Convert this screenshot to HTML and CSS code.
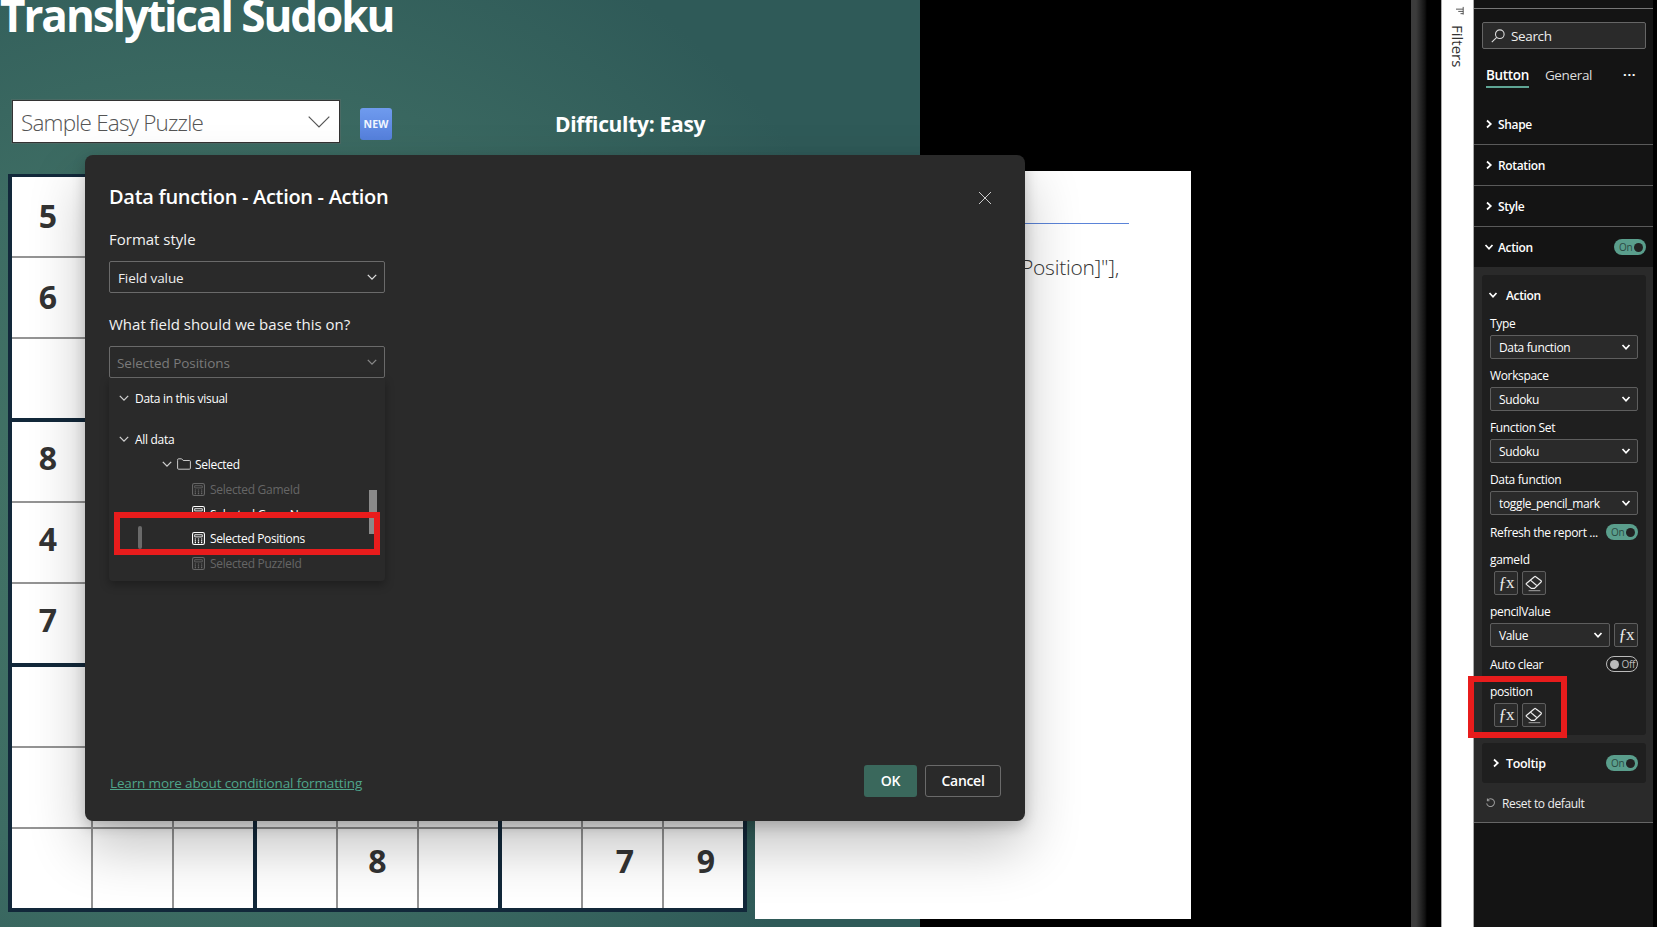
FILE: index.html
```html
<!DOCTYPE html>
<html lang="en">
<head>
<meta charset="utf-8">
<title>Translytical Sudoku</title>
<link rel="stylesheet" href="styles.css">
</head>
<body>
<svg class="defs" width="0" height="0" aria-hidden="true">
  <defs>
    <symbol id="chev" viewBox="0 0 10 10"><path d="M1.5 3.2 5 6.8 8.5 3.2" fill="none" stroke="currentColor" stroke-width="1.1"/></symbol>
    <symbol id="chev-bold" viewBox="0 0 10 10"><path d="M1.5 3 5 6.8 8.5 3" fill="none" stroke="currentColor" stroke-width="1.7"/></symbol>
    <symbol id="chev-right" viewBox="0 0 10 10"><path d="M3 1.5 6.8 5 3 8.5" fill="none" stroke="currentColor" stroke-width="1.7"/></symbol>
    <symbol id="calc" viewBox="0 0 12 12"><rect x=".5" y=".5" width="11" height="11" rx="1.6" fill="none" stroke="currentColor"/><path d="M2.5 2.5h7v2h-7z" fill="none" stroke="currentColor" stroke-width=".8"/><path d="M2.5 6.5h1.2M5.4 6.5h1.2M8.3 6.5h1.2M2.5 8.2h1.2M5.4 8.2h1.2M8.3 8.2h1.2M2.5 9.8h1.2M5.4 9.8h1.2M8.3 9.8h1.2" stroke="currentColor"/></symbol>
    <symbol id="eraser" viewBox="0 0 20 20"><path d="M1.500 10.500 10.500 3a1 1 0 0 1 1.400 0l6 4.500a1 1 0 0 1 0 1.400L10.500 16H7L1.500 11.600a.8.8 0 0 1 0-1.100Z" fill="none" stroke="currentColor" stroke-width="1.300"/><path d="M6 6.800 13 12.800" stroke="currentColor" stroke-width="1.300"/><path d="M4 18.500h13" stroke="#9a9a9a" stroke-width="1.200"/></symbol>
  </defs>
</svg>

<div class="app">
  <main class="report">
    <section class="canvas">
      <h1 class="title">Translytical Sudoku</h1>
      <div class="toolbar">
        <div class="slicer">
          <span>Sample Easy Puzzle</span>
          <svg class="slicer-chev" viewBox="0 0 22 12"><path d="M.7.7 11 11 21.300.7" fill="none" stroke="#555" stroke-width="1.200"/></svg>
        </div>
        <div class="new-btn">NEW</div>
        <div class="difficulty">Difficulty: Easy</div>
      </div>
      <div class="board">
        <div class="box">
          <div class="cell first">5</div><div class="cell"></div><div class="cell"></div>
          <div class="cell first">6</div><div class="cell"></div><div class="cell"></div>
          <div class="cell first"></div><div class="cell"></div><div class="cell"></div>
        </div>
        <div class="box">
          <div class="cell"></div><div class="cell"></div><div class="cell"></div>
          <div class="cell"></div><div class="cell"></div><div class="cell"></div>
          <div class="cell"></div><div class="cell"></div><div class="cell"></div>
        </div>
        <div class="box">
          <div class="cell"></div><div class="cell"></div><div class="cell"></div>
          <div class="cell"></div><div class="cell"></div><div class="cell"></div>
          <div class="cell"></div><div class="cell"></div><div class="cell"></div>
        </div>
        <div class="box">
          <div class="cell first">8</div><div class="cell"></div><div class="cell"></div>
          <div class="cell first">4</div><div class="cell"></div><div class="cell"></div>
          <div class="cell first">7</div><div class="cell"></div><div class="cell"></div>
        </div>
        <div class="box">
          <div class="cell"></div><div class="cell"></div><div class="cell"></div>
          <div class="cell"></div><div class="cell"></div><div class="cell"></div>
          <div class="cell"></div><div class="cell"></div><div class="cell"></div>
        </div>
        <div class="box">
          <div class="cell"></div><div class="cell"></div><div class="cell"></div>
          <div class="cell"></div><div class="cell"></div><div class="cell"></div>
          <div class="cell"></div><div class="cell"></div><div class="cell"></div>
        </div>
        <div class="box">
          <div class="cell first"></div><div class="cell"></div><div class="cell"></div>
          <div class="cell first"></div><div class="cell"></div><div class="cell"></div>
          <div class="cell first"></div><div class="cell"></div><div class="cell"></div>
        </div>
        <div class="box">
          <div class="cell"></div><div class="cell"></div><div class="cell"></div>
          <div class="cell"></div><div class="cell"></div><div class="cell"></div>
          <div class="cell"></div><div class="cell">8</div><div class="cell"></div>
        </div>
        <div class="box">
          <div class="cell"></div><div class="cell"></div><div class="cell"></div>
          <div class="cell"></div><div class="cell"></div><div class="cell"></div>
          <div class="cell"></div><div class="cell">7</div><div class="cell">9</div>
        </div>
      </div>
    </section>
    <aside class="doc">
      <div class="doc-rule"></div>
      <p class="doc-text">Position]"],</p>
    </aside>
  </main>

  <div class="splitter"></div>

  <aside class="filters">
    <svg class="filters-icon" viewBox="0 0 10 10"><path d="M0 3.500h8M2.500 6h5.500M5 8.500h3M8 1v8.500" fill="none" stroke="#444" stroke-width="1"/></svg>
    <span class="filters-label">Filters</span>
  </aside>

  <aside class="format">
    <div class="format-top"></div>
    <div class="search">
      <svg class="search-icon" viewBox="0 0 14 14"><circle cx="8.800" cy="5.200" r="4.300" fill="none" stroke="currentColor" stroke-width="1.100"/><path d="M5.700 8.300.8 13.200" stroke="currentColor" stroke-width="1.100"/></svg>
      <span>Search</span>
    </div>
    <div class="tabs">
      <span class="tab tab-active">Button</span>
      <span class="tab">General</span>
      <span class="tab-more">···</span>
    </div>
    <div class="section"><svg class="ic-sm"><use href="#chev-right"/></svg><span>Shape</span></div>
    <div class="section"><svg class="ic-sm"><use href="#chev-right"/></svg><span>Rotation</span></div>
    <div class="section"><svg class="ic-sm"><use href="#chev-right"/></svg><span>Style</span></div>
    <div class="section section-open">
      <svg class="ic-sm"><use href="#chev-bold"/></svg><span>Action</span>
      <span class="toggle toggle-end"><span class="toggle-text">On</span><span class="knob"></span></span>
    </div>
    <div class="section-body">
      <div class="card">
        <div class="card-head"><svg class="ic-sm"><use href="#chev-bold"/></svg><span>Action</span></div>
        <div class="field"><label>Type</label><div class="pick"><span>Data function</span><svg class="ic-pick"><use href="#chev-bold"/></svg></div></div>
        <div class="field"><label>Workspace</label><div class="pick"><span>Sudoku</span><svg class="ic-pick"><use href="#chev-bold"/></svg></div></div>
        <div class="field"><label>Function Set</label><div class="pick"><span>Sudoku</span><svg class="ic-pick"><use href="#chev-bold"/></svg></div></div>
        <div class="field"><label>Data function</label><div class="pick"><span>toggle_pencil_mark</span><svg class="ic-pick"><use href="#chev-bold"/></svg></div></div>
        <div class="switch-row"><span>Refresh the report ...</span><span class="toggle"><span class="toggle-text">On</span><span class="knob"></span></span></div>
        <div class="field"><label>gameId</label>
          <div class="btn-pair"><span class="sq fx">ƒx</span><span class="sq"><svg class="ic-eraser"><use href="#eraser"/></svg></span></div>
        </div>
        <div class="field"><label>pencilValue</label>
          <div class="pick-row">
            <div class="pick pick-grow"><span>Value</span><svg class="ic-pick"><use href="#chev-bold"/></svg></div>
            <span class="sq fx">ƒx</span>
          </div>
        </div>
        <div class="switch-row"><span>Auto clear</span><span class="toggle toggle-off"><span class="knob"></span><span class="toggle-text">Off</span></span></div>
        <div class="field field-last"><label>position</label>
          <div class="btn-pair"><span class="sq fx">ƒx</span><span class="sq"><svg class="ic-eraser"><use href="#eraser"/></svg></span></div>
        </div>
      </div>
      <div class="card card-row">
        <svg class="ic-sm"><use href="#chev-right"/></svg><span>Tooltip</span>
        <span class="toggle toggle-end"><span class="toggle-text">On</span><span class="knob"></span></span>
      </div>
      <div class="reset">
        <svg class="ic-reset" viewBox="0 0 12 12"><path d="M2.800 2.200a4.300 4.300 0 1 1-1 3.600M2.600.6v2.300h2.300" fill="none" stroke="#999" stroke-width="1.100"/></svg>
        <span>Reset to default</span>
      </div>
    </div>
  </aside>

  <div class="dialog">
    <div class="dialog-head">
      <h2>Data function - Action - Action</h2>
      <svg class="dialog-close" viewBox="0 0 14 14"><path d="M1 1l12 12M13 1 1 13" stroke="#ccc" stroke-width="1"/></svg>
    </div>
    <div class="dlg-label dlg-label-first">Format style</div>
    <div class="combo"><span>Field value</span><svg class="ic-combo"><use href="#chev"/></svg></div>
    <div class="dlg-label">What field should we base this on?</div>
    <div class="combo combo-dim"><span>Selected Positions</span><svg class="ic-combo"><use href="#chev"/></svg></div>
    <div class="tree">
      <div class="tree-row lvl0 row-head"><svg class="ic-tree"><use href="#chev"/></svg><span>Data in this visual</span></div>
      <div class="tree-row lvl0 row-alldata"><svg class="ic-tree"><use href="#chev"/></svg><span>All data</span></div>
      <div class="tree-row lvl1">
        <svg class="ic-tree"><use href="#chev"/></svg>
        <svg class="ic-folder" viewBox="0 0 14 12"><path d="M.6 2.500V1.800a1 1 0 0 1 1-1h3L6.200 2.500h6.200a1 1 0 0 1 1 1v6.700a1 1 0 0 1-1 1H1.600a1 1 0 0 1-1-1Z" fill="none" stroke="currentColor" stroke-width=".9"/></svg>
        <span>Selected</span>
      </div>
      <div class="tree-row lvl2 row-dim row-gameid"><svg class="ic-calc"><use href="#calc"/></svg><span>Selected GameId</span></div>
      <div class="tree-row lvl2 row-cut"><svg class="ic-calc"><use href="#calc"/></svg><span>Selected GameName</span></div>
      <div class="tree-row lvl2 row-current"><svg class="ic-calc"><use href="#calc"/></svg><span>Selected Positions</span></div>
      <div class="tree-row lvl2 row-dim row-puzzle"><svg class="ic-calc"><use href="#calc"/></svg><span>Selected PuzzleId</span></div>
      <div class="tree-scroll"></div>
    </div>
    <div class="dialog-foot">
      <a class="learn" href="#">Learn more about conditional formatting</a>
      <div class="dialog-actions">
        <span class="btn btn-ok">OK</span>
        <span class="btn btn-cancel">Cancel</span>
      </div>
    </div>
  </div>

  <div class="mark mark-tree"></div>
  <div class="mark mark-position"></div>
</div>
</body>
</html>
```

FILE: styles.css
```css
* { box-sizing: border-box; }
html, body { margin: 0; padding: 0; background: #000; }
body { font-family: "Open Sans", "Noto Sans", sans-serif; }
.defs { position: absolute; }

.app {
  position: relative;
  display: flex;
  width: 1657px;
  height: 927px;
  overflow: hidden;
  background: #000;
}

/* Report canvas */
.report { position: relative; width: 1411px; height: 927px; flex: none; }
.canvas {
  width: 920px;
  height: 927px;
  background: radial-gradient(ellipse 720px 660px at 200px 520px, #447566 0%, #3d6c63 55%, #2f5a58 100%);
  overflow: hidden;
}
.title {
  margin: -3px 0 0;
  height: 43px;
  font-size: 44px;
  line-height: 36px;
  font-weight: 700;
  letter-spacing: -2.05px;
  color: #fff;
  white-space: nowrap;
}
.toolbar { display: flex; align-items: center; margin-top: 60px; padding-left: 12px; height: 43px; }
.slicer {
  display: flex;
  align-items: center;
  justify-content: space-between;
  width: 328px;
  height: 43px;
  padding: 2px 9px 0 8px;
  background: #fff;
  border: 1px solid #333;
  outline: 1px solid #4a6a64;
  font-size: 22.500px;
  font-weight: 300;
  letter-spacing: -.8px;
  color: #555;
}
.slicer-chev { width: 22px; height: 12px; margin-top: -2px; }
.new-btn {
  display: flex;
  align-items: center;
  justify-content: center;
  width: 32px;
  height: 32px;
  margin: 4px 0 0 20px;
  border-radius: 3px;
  background: linear-gradient(180deg, #6f9bee, #5580dc);
  font-size: 10.500px;
  font-weight: 700;
  color: #f0f6ff;
  letter-spacing: .2px;
}
.difficulty {
  margin: 4px 0 0 163px;
  font-size: 21px;
  font-weight: 700;
  letter-spacing: -.3px;
  color: #fff;
}
.board {
  display: grid;
  grid-template-columns: repeat(3, 241px);
  grid-template-rows: repeat(3, 241px);
  gap: 4px;
  width: 739px;
  height: 738px;
  margin: 31px 0 0 8px;
  padding: 3px 4px 4px;
  background: #12283a;
}
.box {
  display: grid;
  grid-template-columns: repeat(3, 79px);
  grid-template-rows: repeat(3, 79px);
  gap: 2px;
  background: #949494;
}
.cell {
  display: flex;
  align-items: center;
  justify-content: center;
  background: #fff;
  padding-bottom: 2px;
  font-size: 32px;
  font-weight: 700;
  color: #333;
}
.cell.first { padding-right: 7px; }
.box:nth-child(n+4) .cell { padding-bottom: 8px; }
.box:nth-child(n+7) .cell { padding-bottom: 16px; }
.box:nth-child(9) .cell { padding-left: 5px; }

.doc {
  position: absolute;
  left: 755px;
  top: 171px;
  width: 436px;
  height: 748px;
  background: #fff;
}
.doc-rule { height: 1px; margin: 52px 62px 0 0; background: #5b84d8; }
.doc-text {
  margin: 28px 0 0 266px;
  font-size: 21px;
  font-weight: 300;
  letter-spacing: -.25px;
  line-height: 30px;
  color: #333;
  white-space: nowrap;
}

.splitter {
  width: 30px;
  flex: none;
  background: linear-gradient(90deg, #3c3c3c 0, #3c3c3c 5px, #111 14px, #000 16px);
}

/* Filters rail */
.filters {
  display: flex;
  flex-direction: column;
  align-items: center;
  width: 32px;
  flex: none;
  background: #fff;
  border-left: 1px solid #aaa;
  padding-top: 6px;
}
.filters-icon { width: 9px; height: 9px; margin-left: 6px; }
.filters-label {
  margin-top: 10px;
  writing-mode: vertical-rl;
  font-size: 15px;
  letter-spacing: 0;
  color: #333;
}

/* Format pane */
.format {
  width: 180px;
  flex: none;
  background: #141414;
  border-left: 1px solid #aaa;
  font-size: 12px;
  letter-spacing: -.35px;
  color: #fff;
}
.format-top { height: 9px; border-bottom: 1px solid #777; }
.search {
  display: flex;
  align-items: center;
  gap: 6px;
  height: 27px;
  margin: 13px 7px 0 8px;
  padding-left: 8px;
  background: #2a2a2a;
  border: 1px solid #666;
  border-radius: 2px;
  font-size: 13.500px;
  color: #eee;
}
.search-icon { width: 14px; height: 14px; color: #ddd; }
.tabs { display: flex; align-items: flex-start; height: 55px; padding: 16px 0 0 12px; }
.tab { font-size: 13.500px; line-height: 20px; height: 23px; color: #ddd; margin-right: 16px; }
.tab-active { font-weight: 600; color: #fff; border-bottom: 2px solid #5fa595; }
.tab-more { margin-left: 15px; line-height: 18px; font-weight: 700; font-size: 13px; letter-spacing: .6px; }
.section {
  display: flex;
  align-items: center;
  gap: 4px;
  height: 41px;
  padding-left: 10px;
  border-bottom: 1px solid #5a5a5a;
  font-weight: 600;
}
.section-open { height: 40px; border-bottom: 0; padding-right: 7px; }
.ic-sm { width: 10px; height: 10px; flex: none; }
.toggle {
  display: inline-flex;
  align-items: center;
  justify-content: space-between;
  width: 32px;
  height: 16px;
  padding: 0 3px 0 5px;
  border-radius: 8px;
  background: #5a9e8c;
  font-size: 10px;
  font-weight: 400;
  color: #2a4a42;
  flex: none;
}
.toggle .knob { width: 9px; height: 9px; border-radius: 50%; background: #222; }
.toggle-off { background: transparent; border: 1px solid #bbb; color: #bbb; padding: 0 2px 0 3px; }
.toggle-off .knob { background: #bbb; }
.toggle-end { margin-left: auto; }
.section-body { height: 556px; padding: 8px 7px 0 8px; background: #2a2a2a; border-bottom: 1px solid #666; }
.card { padding: 8px 8px 8px; border-radius: 3px; background: #1f1f1f; }
.card-head { display: flex; align-items: center; gap: 8px; height: 24px; margin: 0 0 9px -2px; font-weight: 600; }
.field { margin-bottom: 9px; }
.field label { display: block; height: 16px; line-height: 16px; margin-bottom: 3px; }
.field-last { margin-bottom: 0; }
.pick {
  display: flex;
  align-items: center;
  justify-content: space-between;
  height: 24px;
  padding: 0 6px 0 8px;
  background: #2a2a2a;
  border: 1px solid #5e5e5e;
  border-radius: 2px;
}
.pick-row { display: flex; gap: 4px; }
.pick-grow { flex: 1; }
.ic-pick { width: 10px; height: 10px; flex: none; }
.switch-row { display: flex; align-items: center; justify-content: space-between; height: 16px; margin-bottom: 12px; }
.btn-pair { display: flex; gap: 4px; margin-left: 4px; }
.sq {
  display: flex;
  align-items: center;
  justify-content: center;
  width: 24px;
  height: 24px;
  flex: none;
  background: #2a2a2a;
  border: 1px solid #5e5e5e;
  border-radius: 2px;
}
.fx { font-family: "Liberation Serif", serif; font-size: 17px; letter-spacing: -1px; color: #eee; }
.ic-eraser { width: 18px; height: 18px; color: #eee; }
.card-row {
  display: flex;
  align-items: center;
  gap: 5px;
  height: 40px;
  margin-top: 8px;
  padding: 0 8px 0 9px;
  font-size: 12.500px;
  font-weight: 600;
}
.reset { display: flex; align-items: center; gap: 6px; height: 24px; margin-top: 8px; padding-left: 3px; color: #eee; }
.ic-reset { width: 11px; height: 11px; }

/* Dialog */
.dialog {
  position: absolute;
  left: 85px;
  top: 155px;
  display: flex;
  flex-direction: column;
  width: 940px;
  height: 666px;
  padding: 24px;
  border-radius: 8px;
  background: #2a2a2a;
  box-shadow: 0 26px 56px rgba(0,0,0,.24), 0 5px 14px rgba(0,0,0,.2);
  color: #fff;
}
.dialog-head { display: flex; align-items: center; justify-content: space-between; height: 36px; padding-right: 9px; }
.dialog-head h2 { margin: -2px 0 0; font-size: 20px; font-weight: 600; letter-spacing: -.3px; }
.dialog-close { width: 14px; height: 14px; margin-top: 2px; }
.dlg-label { height: 20px; line-height: 20px; margin-top: 21px; font-size: 15px; letter-spacing: 0; color: #f2f2f2; }
.dlg-label-first { margin-top: 14px; }
.combo {
  display: flex;
  align-items: center;
  justify-content: space-between;
  flex: none;
  width: 276px;
  height: 32px;
  margin-top: 12px;
  padding: 2px 6px 0 8px;
  border: 1px solid #6a6a6a;
  border-radius: 2px;
  font-size: 13.500px;
  letter-spacing: -.1px;
  color: #eee;
}
.combo-dim { padding-left: 7px; letter-spacing: -.05px; color: #7a7a7a; }
.combo-dim .ic-combo { color: #888; }
.ic-combo { width: 12px; height: 12px; margin-top: -2px; color: #ddd; }
.tree {
  position: relative;
  flex: none;
  width: 276px;
  height: 203px;
  padding-top: 8px;
  border-radius: 0 0 4px 4px;
  box-shadow: 0 4px 10px rgba(0,0,0,.3);
  font-size: 12px;
  letter-spacing: -.3px;
  overflow: hidden;
}
.tree-row { display: flex; align-items: center; height: 24px; white-space: nowrap; }
.lvl0 { padding-left: 9px; gap: 5px; }
.lvl1 { padding-left: 52px; gap: 4px; margin-top: 1px; }
.lvl2 { padding-left: 83px; gap: 5px; }
.row-alldata { margin-top: 17px; }
.row-dim { color: #666; }
.row-gameid { margin-top: 1px; }
.row-cut { height: 16px; margin-top: 1px; overflow: hidden; align-items: flex-start; padding-top: 4px; }
.row-current { height: 32px; padding-top: 8px; position: relative; background: #2a2a2a; letter-spacing: -.35px; }
.row-current::before {
  content: "";
  position: absolute;
  left: 29px;
  top: 8px;
  width: 4px;
  height: 23px;
  border-radius: 2px;
  background: #6a6a6a;
}
.row-puzzle { margin-top: 1px; }
.ic-tree { width: 12px; height: 12px; flex: none; color: #ccc; }
.ic-folder { width: 14px; height: 12px; flex: none; color: #ddd; }
.ic-calc { width: 13px; height: 13px; flex: none; }
.tree-scroll { position: absolute; right: 8px; top: 112px; width: 8px; height: 44px; background: #8a8a8a; }
.dialog-foot { display: flex; align-items: center; justify-content: space-between; margin-top: auto; }
.learn { margin: 4px 0 0 1px; font-size: 13.500px; letter-spacing: -.14px; color: #4fa58a; text-decoration: underline; }
.dialog-actions { display: flex; gap: 8px; }
.btn {
  display: flex;
  align-items: center;
  justify-content: center;
  height: 32px;
  padding-bottom: 1px;
  border-radius: 3px;
  font-size: 14px;
  font-weight: 600;
  letter-spacing: -.3px;
}
.btn-ok { width: 53px; background: #3a685c; }
.btn-cancel { width: 76px; border: 1px solid #6a6a6a; }

/* Red highlight boxes */
.mark { position: absolute; border: 6px solid #e81c1c; pointer-events: none; }
.mark-tree { left: 114px; top: 512px; width: 266px; height: 43px; }
.mark-position { left: 1468px; top: 676px; width: 99px; height: 62px; }
```
